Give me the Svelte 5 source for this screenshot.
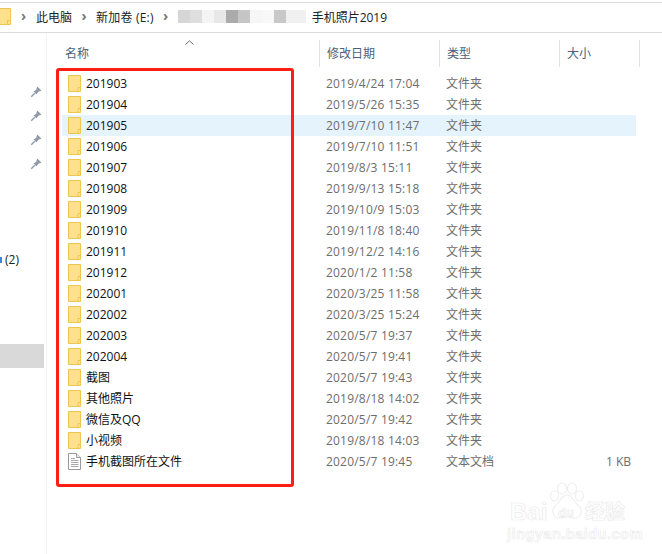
<script>
  const rows = [
    ['201903', '2019/4/24 17:04'],
    ['201904', '2019/5/26 15:35'],
    ['201905', '2019/7/10 11:47'],
    ['201906', '2019/7/10 11:51'],
    ['201907', '2019/8/3 15:11'],
    ['201908', '2019/9/13 15:18'],
    ['201909', '2019/10/9 15:03'],
    ['201910', '2019/11/8 18:40'],
    ['201911', '2019/12/2 14:16'],
    ['201912', '2020/1/2 11:58'],
    ['202001', '2020/3/25 11:58'],
    ['202002', '2020/3/25 15:24'],
    ['202003', '2020/5/7 19:37'],
    ['202004', '2020/5/7 19:41'],
    ['截图', '2020/5/7 19:43'],
    ['其他照片', '2019/8/18 14:02'],
    ['微信及QQ', '2020/5/7 19:42'],
    ['小视频', '2019/8/18 14:03']
  ];
  const pins = [0, 1, 2, 3];
  // redacted part of the path: mosaic blocks
  const blur = [
    ['#d6d6d6', 12], ['#dedede', 12], ['#f4f4f4', 12], ['#e8e8e8', 12], ['#ababab', 12],
    ['#c6c6c6', 12], ['#f6f6f6', 12], ['#f8f8f8', 12], ['#c8c8c8', 12], ['#f0f0f0', 20]
  ];
  const isCjk = (s) => /[^\x00-\x7f]/.test(s);
</script>

<div class="window">
  <header class="address">
    <svg class="addr-folder" width="12" height="17" viewBox="0 0 12 17">
      <path d="M0.5 0.5H11.5V16.5H0.5Z" fill="#ffe08c" stroke="#ecc650" />
      <path d="M8.5 16V12.5H11" fill="none" stroke="#ecc650" />
    </svg>
    <span class="chev first">›</span>
    <span class="crumb">此电脑</span>
    <span class="chev">›</span>
    <span class="crumb wide">新加卷 (E:)</span>
    <span class="chev">›</span>
    <span class="blurred">
      {#each blur as [color, w]}
        <i style="background: {color}; width: {w}px"></i>
      {/each}
    </span>
    <span class="crumb">手机照片2019</span>
  </header>

  <div class="body">
    <aside class="nav">
      <div class="pins">
        {#each pins as p}
          <svg class="pin" width="12" height="12" viewBox="0 0 12 12">
            <path d="M7.2 0.6 L11.4 4.6 L10 5.2 L8.4 5.4 L6.6 8.4 L3.6 5.4 L6.4 3.8 L6.6 2.2 Z" fill="#8d99a6" />
            <path d="M4.8 7.2 L1.2 10.8" stroke="#8d99a6" stroke-width="1.3" />
          </svg>
        {/each}
      </div>
      <div class="count"><span class="cut"></span>(2)</div>
      <div class="nav-selected"></div>
    </aside>

    <main class="list">
      <div class="head">
        <div class="col name">名称<svg class="sort" width="9" height="5" viewBox="0 0 9 5"><path d="M0.5 4.5 L4.5 0.8 L8.5 4.5" fill="none" stroke="#6f6f6f" /></svg></div>
        <div class="col date">修改日期</div>
        <div class="col kind">类型</div>
        <div class="col size">大小</div>
      </div>

      {#each rows as [name, date], i}
        <div class="row" class:hl={i === 2}>
          <svg class="ico" width="13" height="17" viewBox="0 0 13 17">
            <path d="M0.5 0.5H12.5V16.5H0.5Z" fill="#ffe08c" stroke="#ecc650" />
            <path d="M10 16V12.5H12" fill="none" stroke="#ecc650" />
          </svg>
          <span class="fname" class:cjk={isCjk(name)}>{name}</span>
          <span class="fdate">{date}</span>
          <span class="ftype cjk">文件夹</span>
        </div>
      {/each}

      <div class="row">
        <svg class="ico" width="13" height="17" viewBox="0 0 13 17">
          <path d="M0.5 0.5H8.5L12.5 4.5V16.5H0.5Z" fill="#fff" stroke="#9a9a9a" />
          <path d="M8.5 0.5V4.5H12.5" fill="#eee" stroke="#9a9a9a" />
          <path d="M3 5.5H7M3 7.5H10.5M3 9.5H10.5M3 11.5H10.5M3 13.5H10.5" stroke="#a8a8a8" />
        </svg>
        <span class="fname cjk">手机截图所在文件</span>
        <span class="fdate">2020/5/7 19:45</span>
        <span class="ftype cjk">文本文档</span>
        <span class="fsize">1 KB</span>
      </div>
    </main>
  </div>

  <div class="redbox"></div>

  <div class="mark">
    <svg class="paw" width="36" height="42" viewBox="0 0 36 42">
      <g fill="#fff" stroke="#efefef" stroke-width="1.2">
        <ellipse cx="5.5" cy="14" rx="4" ry="5" />
        <ellipse cx="13" cy="6.5" rx="4.5" ry="5.5" />
        <ellipse cx="23" cy="6.5" rx="4.5" ry="5.5" />
        <ellipse cx="30.5" cy="14" rx="4" ry="5" />
        <path d="M18 13 C23 13 24 19 29 23 C34 27 33 36 26 36 C22 36 21 35 18 35 C15 35 14 36 10 36 C3 36 2 27 7 23 C12 19 13 13 18 13 Z" />
      </g>
    </svg>
    <span class="mark-bai">Bai</span>
    <span class="mark-du">du</span>
    <span class="mark-cn">经验</span>
    <span class="mark-url">jingyan.baidu.com</span>
  </div>
</div>

<style>
  :global(body) {
    margin: 0;
    background: #fff;
  }

  .window {
    position: relative;
    width: 662px;
    height: 554px;
    overflow: hidden;
    background: #fff;
    font: 12px "Open Sans", "Noto Sans CJK SC", sans-serif;
    color: #111;
  }

  /* address bar */
  .address {
    box-sizing: border-box;
    height: 31px;
    margin-top: 2px;
    border-top: 1px solid #dadada;
    border-bottom: 1px solid #dadada;
    padding-bottom: 2px;
    display: flex;
    align-items: center;
    white-space: nowrap;
  }

  .addr-folder {
    margin-left: -1px;
    flex-shrink: 0;
  }

  .chev {
    color: #777;
    font-size: 14px;
    font-weight: 700;
    line-height: 1;
    width: 24px;
    text-align: center;
    margin-top: -2px;
  }

  .chev.first {
    width: 25px;
  }

  .crumb {
    color: #222;
  }

  .crumb.wide {
    letter-spacing: 0.2px;
  }

  .blurred {
    display: flex;
    height: 13px;
    margin: 0 6px 0 0;
  }

  .blurred i {
    display: block;
  }

  /* body */
  .body {
    display: flex;
    height: 521px;
  }

  .nav {
    box-sizing: border-box;
    width: 47px;
    flex-shrink: 0;
    border-right: 1px solid #f2f2f2;
    padding-top: 53px;
    display: flex;
    flex-direction: column;
  }

  .pins {
    display: flex;
    flex-direction: column;
    gap: 12px;
    align-items: flex-end;
    padding-right: 4px;
  }

  .count {
    margin-top: 81px;
    height: 17px;
    line-height: 17px;
    color: #222;
    display: flex;
    align-items: center;
  }

  .cut {
    width: 2px;
    height: 6px;
    margin-right: 3px;
    background: #3f86d0;
  }

  .nav-selected {
    width: 44px;
    height: 24px;
    margin-top: 76px;
    background: #d9d9d9;
  }

  /* file list */
  .list {
    flex: 1;
    padding-top: 7px;
  }

  .head {
    display: flex;
    height: 27px;
    margin-bottom: 6px;
    color: #4c607a;
  }

  .col {
    box-sizing: border-box;
    height: 27px;
    line-height: 28px;
    padding-left: 7px;
    border-right: 1px solid #e2e2e2;
    position: relative;
  }

  .col.name {
    width: 273px;
    padding-left: 18px;
  }

  .col.date,
  .col.kind {
    width: 120px;
  }

  .col.size {
    width: 80px;
  }

  .sort {
    position: absolute;
    left: 138px;
    top: 0;
  }

  .row {
    display: flex;
    align-items: center;
    height: 21px;
    margin-left: 15px;
    width: 574px;
  }

  .row.hl {
    background: #e5f3fd;
  }

  .ico {
    margin-left: 6px;
    flex-shrink: 0;
  }

  .fname {
    margin-left: 5px;
    width: 240px;
    flex-shrink: 0;
    color: #111;
  }

  .fdate {
    width: 120px;
    flex-shrink: 0;
    color: #6d6d6d;
    letter-spacing: 0.2px;
  }

  .ftype {
    width: 120px;
    flex-shrink: 0;
    color: #6d6d6d;
  }

  .cjk {
    margin-bottom: 2px;
  }

  .fsize {
    width: 65px;
    text-align: right;
    color: #6d6d6d;
  }

  .redbox {
    position: absolute;
    left: 56px;
    top: 68px;
    width: 232px;
    height: 413px;
    border: 3px solid #ff1e14;
    border-radius: 3px;
    pointer-events: none;
  }

  /* baidu watermark */
  .mark {
    position: absolute;
    left: 500px;
    top: 478px;
    width: 140px;
    height: 68px;
    color: #fff;
    font-family: "Liberation Sans", "Noto Sans CJK SC", sans-serif;
    font-weight: 700;
    -webkit-text-stroke: 0.7px #ececec;
    line-height: 1;
  }

  .paw {
    position: absolute;
    left: 49px;
    top: 4px;
  }

  .mark-bai,
  .mark-du,
  .mark-cn,
  .mark-url {
    position: absolute;
  }

  .mark-bai {
    left: 10px;
    top: 22px;
    font-size: 24px;
  }

  .mark-du {
    left: 58px;
    top: 28px;
    font-size: 13px;
  }

  .mark-cn {
    left: 85px;
    top: 24px;
    font-size: 20px;
  }

  .mark-url {
    left: 7px;
    top: 49px;
    font-size: 14.5px;
    letter-spacing: 0.5px;
  }
</style>
